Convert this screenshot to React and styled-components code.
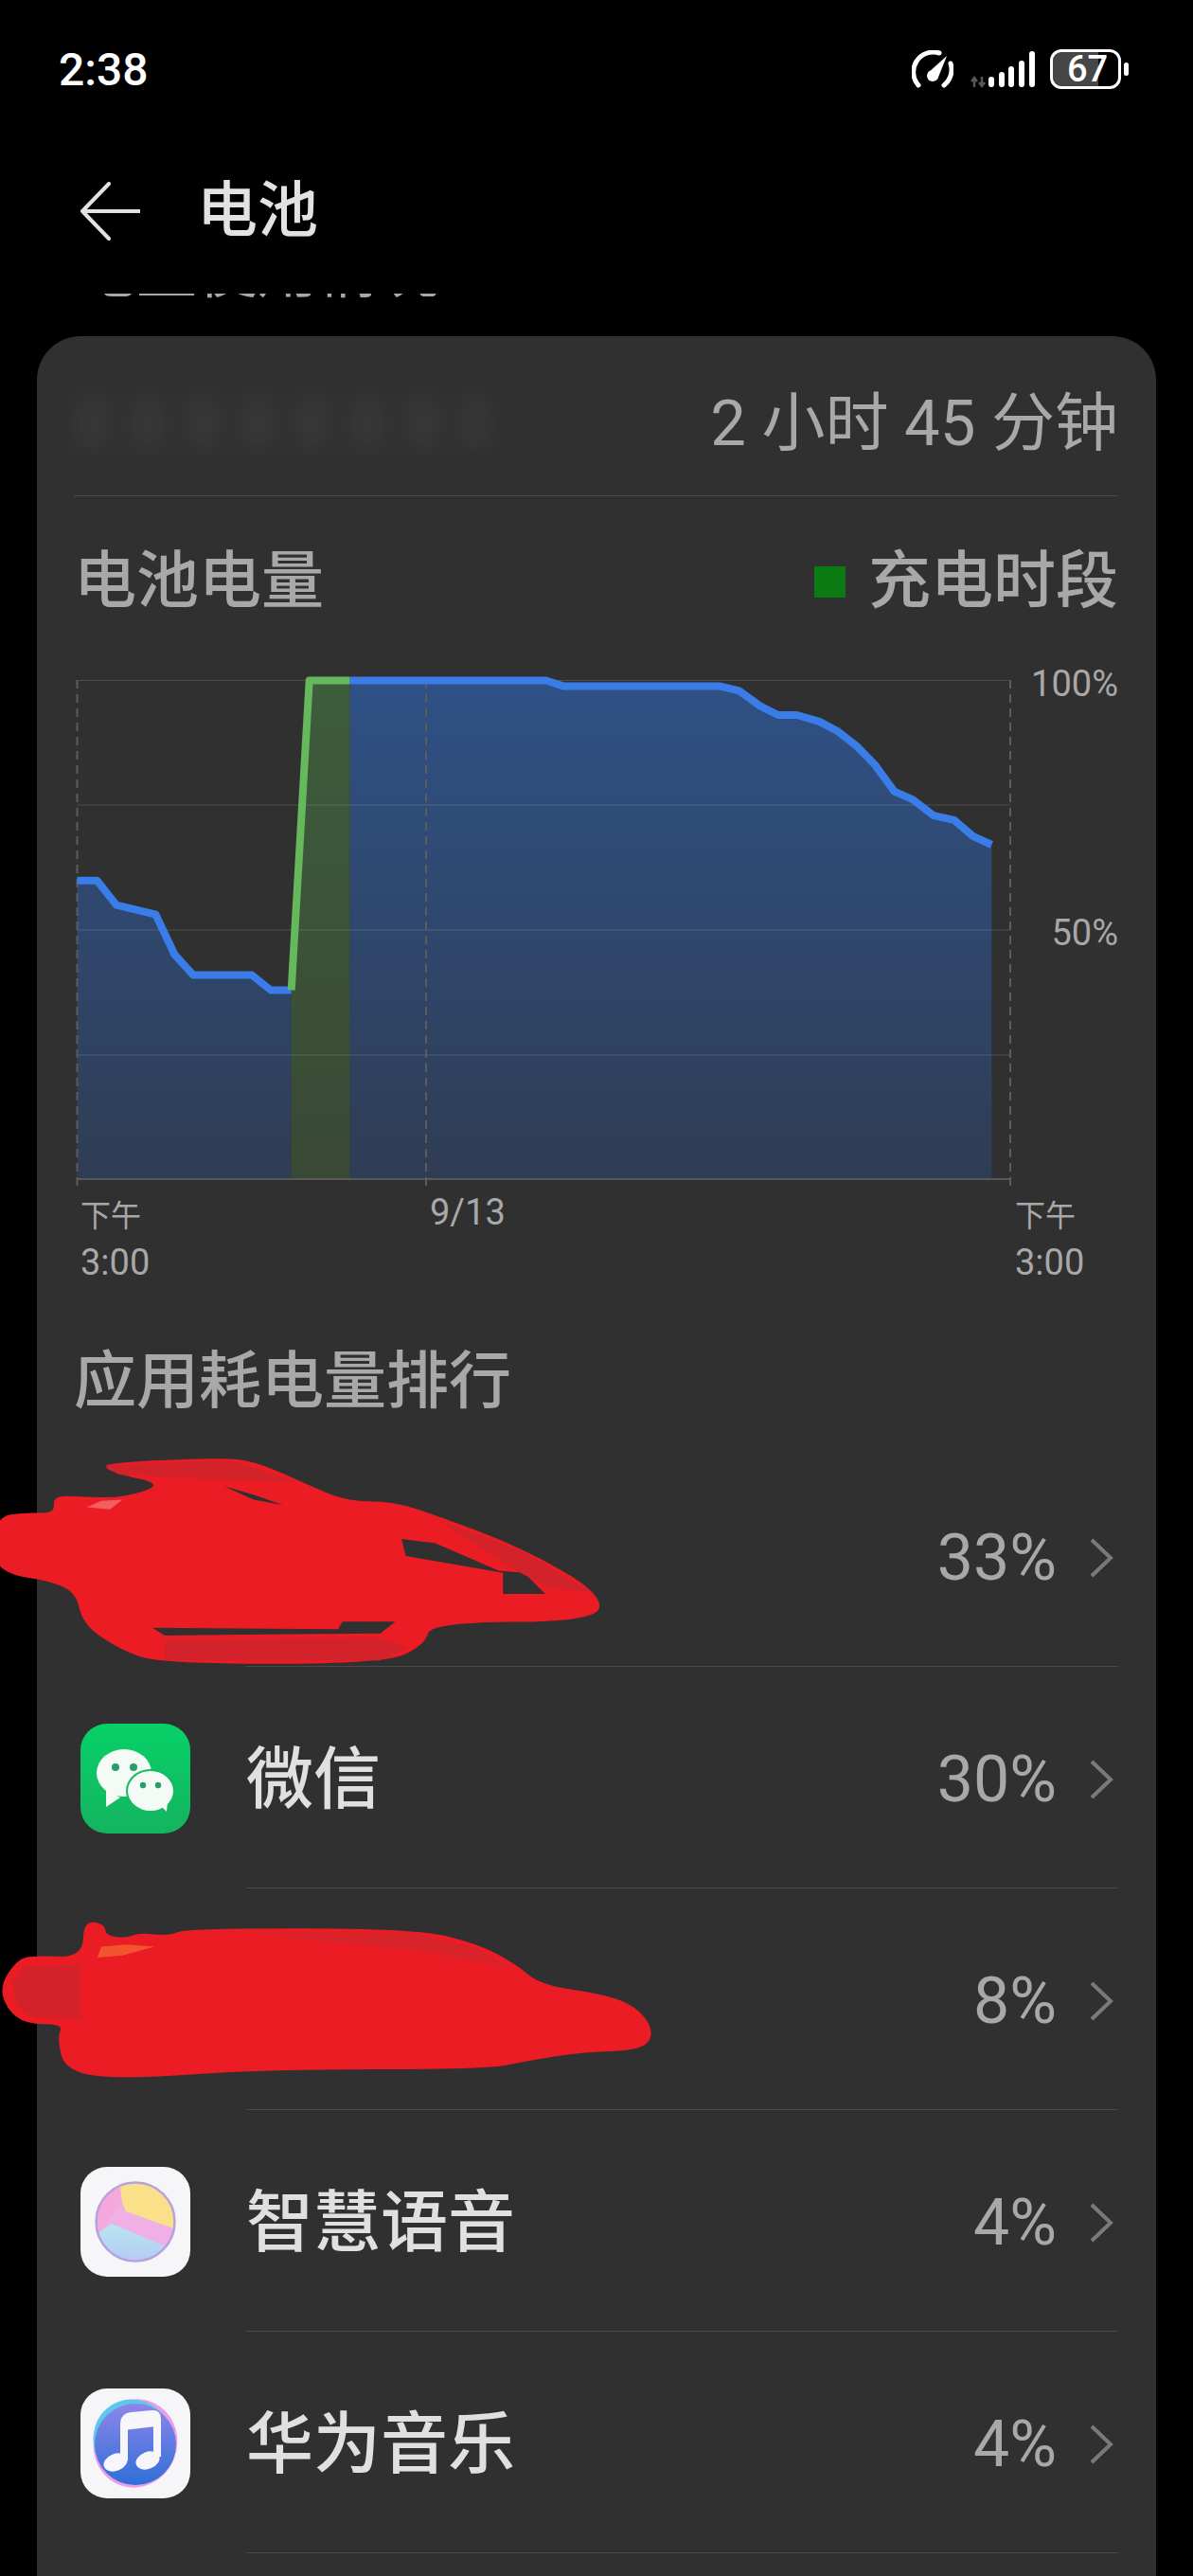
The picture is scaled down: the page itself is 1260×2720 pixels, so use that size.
import React from 'react';
import styled, { createGlobalStyle } from 'styled-components';

const GlobalStyle = createGlobalStyle`
  html, body {
    margin: 0;
    padding: 0;
    background: #000;
  }
  body {
    font-family: Roboto, "Noto Sans CJK SC", sans-serif;
  }
`;

// chart points are in page pixels, the svg viewBox below starts at 78,715
const PLOT_BOTTOM = 1246;
const dischargeA = [
  [81.5, 930.7], [102.5, 930.7], [123, 956.7], [164.5, 966.7], [184.3, 1008.8],
  [204, 1030.5], [266, 1030.5], [286, 1046.5], [307.7, 1046.5],
];
const charging = [[307.7, 1046.5], [326.7, 719.5], [369.4, 719.5]];
const dischargeB = [
  [369.4, 719.5], [576.6, 719.5], [595.5, 725.6], [760.6, 725.6], [780.4, 730.3],
  [804, 747.2], [821.9, 756], [841.7, 756], [865.4, 762.9], [885.1, 773.3],
  [904.9, 788.9], [924.7, 809.3], [944.5, 836.6], [964.2, 845.3], [986, 862.2],
  [1007.7, 866.9], [1027.5, 883.9], [1047.3, 893],
];

const toLine = (pts) => pts.map((p) => p.join(',')).join(' ');
const toArea = (pts) =>
  `${pts[0][0]},${PLOT_BOTTOM} ${toLine(pts)} ${pts[pts.length - 1][0]},${PLOT_BOTTOM}`;

// closed path through the midpoints, gives the paint strokes a brush-like edge
const smooth = (pts) => {
  const mid = (a, b) => [(a[0] + b[0]) / 2, (a[1] + b[1]) / 2];
  const start = mid(pts[pts.length - 1], pts[0]);
  let d = `M${start[0]} ${start[1]}`;
  pts.forEach((p, i) => {
    const m = mid(p, pts[(i + 1) % pts.length]);
    d += `Q${p[0]} ${p[1]} ${m[0]} ${m[1]}`;
  });
  return `${d}Z`;
};

const scribbleOne = [
  [-10, 222], [60, 212], [130, 215], [125, 172], [200, 175], [290, 178], [390, 146], [270, 120], [240, 98],
  [350, 90], [550, 83], [620, 98], [720, 143], [820, 186], [930, 186], [1040, 222], [1240, 298],
  [1425, 405], [1410, 470], [1020, 472], [1005, 525], [910, 570], [380, 570], [280, 535], [195, 475],
  [180, 400], [110, 372], [30, 362], [-15, 330],
];
// the gaps between the brush strokes keep their hard corners
const scribbleOneHoles =
  'M530 150L600 170L670 195L600 182Z' +
  'M950 275L1030 285L1180 350L1240 355L1290 405L1190 405L1190 355L960 315Z' +
  'M360 485L800 488L810 470L935 470L900 498L390 503Z';
const scribbleTwo = [
  [0, 1300], [40, 1240], [80, 1230], [195, 1235], [198, 1150], [248, 1158], [250, 1185], [300, 1190],
  [330, 1178], [400, 1185], [440, 1168], [980, 1168], [1130, 1203], [1220, 1250], [1280, 1298],
  [1420, 1318], [1500, 1343], [1548, 1400], [1525, 1448], [1380, 1452], [1250, 1472], [1150, 1492],
  [620, 1492], [300, 1515], [155, 1498], [135, 1420], [150, 1388], [60, 1388], [15, 1352],
];

const apps = [
  { id: 'a', percent: '33%', scribble: 'first' },
  { id: 'wechat', name: '微信', percent: '30%', icon: 'wechat' },
  { id: 'c', percent: '8%', scribble: 'second' },
  { id: 'voice', name: '智慧语音', percent: '4%', icon: 'voice' },
  { id: 'music', name: '华为音乐', percent: '4%', icon: 'music' },
];

const SpeedIcon = () => (
  <svg width="44" height="41" viewBox="0 0 44 41" fill="none">
    <path d="M7 37A21 21 0 0 1 29 3" stroke="#fff" strokeWidth="5" strokeLinecap="round" />
    <path d="M41 14A21 21 0 0 1 34 37" stroke="#fff" strokeWidth="5" strokeLinecap="round" />
    <path d="M17 24L37 6L27 31Z" fill="#fff" />
    <circle cx="22" cy="27" r="6" fill="#fff" />
  </svg>
);

const SignalIcon = () => (
  <svg width="76" height="44" viewBox="1020 50 76 44">
    <path d="M1029 91V83M1026 85L1029 81L1032 85" stroke="#555" strokeWidth="2.5" fill="none" />
    <path d="M1037 80V88M1034 86L1037 90L1040 86" stroke="#555" strokeWidth="2.5" fill="none" />
    <rect x="1044" y="80" width="6" height="11" rx="3" fill="#fff" />
    <rect x="1055" y="75" width="6" height="16" rx="3" fill="#fff" />
    <rect x="1065" y="69" width="6" height="22" rx="3" fill="#fff" />
    <rect x="1076" y="63" width="6" height="28" rx="3" fill="#fff" />
    <rect x="1087" y="53" width="6" height="38" rx="3" fill="#fff" />
  </svg>
);

const BackIcon = () => (
  <svg width="64" height="62" viewBox="0 0 64 62" fill="none">
    <path d="M31 2L3 31L31 60M3 31H64" stroke="#e2e2e2" strokeWidth="4" strokeLinecap="round" strokeLinejoin="round" />
  </svg>
);

const Chevron = () => (
  <svg width="26" height="42" viewBox="0 0 26 42" fill="none">
    <path d="M3 2L23 21L3 40" stroke="#7a7a7a" strokeWidth="4" />
  </svg>
);

const WeChatIcon = () => (
  <svg width="116" height="116" viewBox="0 0 116 116">
    <defs>
      <linearGradient id="wechatBg" x1="0" y1="0" x2="0" y2="1">
        <stop offset="0" stopColor="#07d168" />
        <stop offset="1" stopColor="#14b45f" />
      </linearGradient>
    </defs>
    <rect width="116" height="116" rx="28" fill="url(#wechatBg)" />
    <ellipse cx="46" cy="52" rx="29" ry="25" fill="#f4faf6" />
    <path d="M27 70L27 88L42 78Z" fill="#f4faf6" />
    <ellipse cx="74" cy="71" rx="26" ry="23" fill="#14b962" />
    <ellipse cx="74" cy="71" rx="24" ry="21" fill="#f4faf6" />
    <path d="M84 86L91 93L92 82Z" fill="#f4faf6" />
    <circle cx="37" cy="46" r="4" fill="#2a9c68" />
    <circle cx="56" cy="46" r="4" fill="#2a9c68" />
    <circle cx="66" cy="65" r="3.2" fill="#2a9c68" />
    <circle cx="82" cy="65" r="3.2" fill="#2a9c68" />
  </svg>
);

const VoiceIcon = () => (
  <svg width="116" height="116" viewBox="0 0 116 116">
    <defs>
      <clipPath id="voiceClip">
        <circle cx="58" cy="58" r="41" />
      </clipPath>
      <linearGradient id="voiceBlue" x1="0" y1="0" x2="0" y2="1">
        <stop offset="0" stopColor="#b8e6f2" />
        <stop offset="1" stopColor="#b4c8f4" />
      </linearGradient>
    </defs>
    <rect width="116" height="116" rx="28" fill="#f6f6f8" />
    <g clipPath="url(#voiceClip)">
      <rect x="15" y="15" width="86" height="86" fill="#f0b0e6" />
      <path d="M42 14L43 35L48 47L101 66V14Z" fill="#fbe08a" />
      <path d="M40 14L44 36L20 72L12 60V14Z" fill="#f4a8dc" />
      <path d="M15 72L33 60L90 84L78 104H15Z" fill="url(#voiceBlue)" />
    </g>
    <circle cx="58" cy="58" r="41.5" fill="none" stroke="#b7a2dc" strokeWidth="2.5" />
  </svg>
);

const MusicIcon = () => (
  <svg width="116" height="116" viewBox="0 0 116 116">
    <defs>
      <linearGradient id="musicBlue" x1="0" y1="0" x2="0" y2="1">
        <stop offset="0" stopColor="#8d86e8" />
        <stop offset="1" stopColor="#2f6fd8" />
      </linearGradient>
    </defs>
    <rect width="116" height="116" rx="28" fill="#f6f6f8" />
    <ellipse cx="58" cy="58" rx="44" ry="47" fill="#ec9fe6" transform="rotate(20 58 58)" />
    <ellipse cx="56" cy="56" rx="42" ry="45" fill="#5fc6ee" transform="rotate(-25 56 56)" />
    <circle cx="58" cy="59" r="43" fill="url(#musicBlue)" />
    <path d="M46 76V38Q46 30 54 29L76 27Q81 27 81 32V72" fill="none" stroke="#f6f6fb" strokeWidth="8" />
    <path d="M46 30H80V40L46 44Z" fill="#f6f6fb" />
    <ellipse cx="37" cy="78" rx="13" ry="9" fill="#f6f6fb" transform="rotate(-22 37 78)" />
    <ellipse cx="71" cy="76" rx="13" ry="9" fill="#f6f6fb" transform="rotate(-22 71 76)" />
  </svg>
);

const appIcons = { wechat: WeChatIcon, voice: VoiceIcon, music: MusicIcon };

// red paint strokes, coordinates come from the 1568 wide crop of the page
const FirstScribble = () => (
  <ScribbleSvg $top={3} width="700" height="239" viewBox="0 60 1568 535" preserveAspectRatio="none">
    <path fillRule="evenodd" fill="#ec1c24" d={smooth(scribbleOne) + scribbleOneHoles} />
    <path fill="#d4222a" d="M250 100L550 90L700 140L520 135L280 122Z" />
    <path fill="#d4222a" d="M1040 232L1240 305L1400 400L1300 392L1200 338Z" />
    <path fill="#d4222a" d="M390 512L900 508L965 530L900 562L390 562Z" />
    <path fill="#f06060" d="M205 200L240 185L290 182L260 205Z" />
  </ScribbleSvg>
);

const SecondScribble = () => (
  <ScribbleSvg $top={11} width="700" height="215" viewBox="0 1100 1568 468" preserveAspectRatio="none">
    <path fill="#ec1c24" d={smooth(scribbleTwo)} />
    <path fill="#d4222a" d="M30 1290L55 1255L190 1250L190 1375L70 1370L40 1345Z" />
    <path fill="#d8232b" d="M600 1180L980 1178L1130 1215L1210 1260L1000 1220Z" />
    <path fill="#f2552e" d="M240 1210L300 1205L365 1210L290 1230L230 1235Z" />
  </ScribbleSvg>
);

const App = () => (
  <Page>
    <GlobalStyle />
    <StatusBar>
      <Clock>2:38</Clock>
      <StatusIcons>
        <SpeedIcon />
        <SignalIcon />
        <Battery>67</Battery>
        <BatteryNub />
      </StatusIcons>
    </StatusBar>

    <Header>
      <BackIcon />
      <Title>电池</Title>
    </Header>

    <ClippedLine>
      <span>电量使用情况</span>
    </ClippedLine>

    <Card>
      <UsageRow>
        <BlurredLabel />
        <Duration>2 小时 45 分钟</Duration>
      </UsageRow>

      <LegendRow>
        <SectionTitle>电池电量</SectionTitle>
        <Legend>
          <LegendSwatch />
          <SectionTitle>充电时段</SectionTitle>
        </Legend>
      </LegendRow>

      <ChartRow>
        <ChartSvg width="990" height="545" viewBox="78 715 990 545">
          <defs>
            <linearGradient id="blueFill" gradientUnits="userSpaceOnUse" x1="0" y1="719" x2="0" y2="1245">
              <stop offset="0" stopColor="#2f5186" />
              <stop offset="1" stopColor="#2f3d54" />
            </linearGradient>
            <linearGradient id="greenFill" gradientUnits="userSpaceOnUse" x1="0" y1="719" x2="0" y2="1245">
              <stop offset="0" stopColor="#3d5d3c" />
              <stop offset="1" stopColor="#3a4934" />
            </linearGradient>
          </defs>
          <polygon points={toArea(dischargeA)} fill="url(#blueFill)" />
          <polygon points={toArea(dischargeB)} fill="url(#blueFill)" />
          <polygon points={toArea(charging)} fill="url(#greenFill)" />
          {[719.5, 851, 983, 1115].map((y) => (
            <line key={y} x1="81" x2="1067" y1={y} y2={y} stroke="#fff" strokeOpacity="0.14" strokeWidth="1" />
          ))}
          <line x1="81" x2="1067" y1={PLOT_BOTTOM} y2={PLOT_BOTTOM} stroke="#666" strokeWidth="1.5" />
          {[81.5, 450, 1067].map((x) => (
            <line key={x} x1={x} x2={x} y1="719" y2="1258" stroke="#5c5c5c" strokeWidth="2" strokeDasharray="9 6" />
          ))}
          <polyline points={toLine(dischargeA)} fill="none" stroke="#3a7de8" strokeWidth="8" strokeLinejoin="round" />
          <polyline points={toLine(dischargeB)} fill="none" stroke="#3a7de8" strokeWidth="8" strokeLinejoin="round" />
          <polyline points={toLine(charging)} fill="none" stroke="#65b85c" strokeWidth="8" strokeLinejoin="round" />
        </ChartSvg>
        <YAxis>
          <AxisLabel>100%</AxisLabel>
          <AxisLabel>50%</AxisLabel>
        </YAxis>
      </ChartRow>

      <XAxis>
        <AxisLabel><AxisCjk>下午</AxisCjk><br />3:00</AxisLabel>
        <DateLabel>9/13</DateLabel>
        <AxisLabel><AxisCjk>下午</AxisCjk><br />3:00</AxisLabel>
      </XAxis>

      <RankTitle>应用耗电量排行</RankTitle>

      {apps.map((app) => {
        const Icon = appIcons[app.icon];
        return (
          <AppRow key={app.id}>
            <IconSlot>{Icon && <Icon />}</IconSlot>
            <RowBody>
              <AppName>{app.name}</AppName>
              <Percent>{app.percent}</Percent>
              <ChevronSlot><Chevron /></ChevronSlot>
            </RowBody>
            {app.scribble === 'first' && <FirstScribble />}
            {app.scribble === 'second' && <SecondScribble />}
          </AppRow>
        );
      })}
    </Card>
  </Page>
);

const Page = styled.div`
  width: 1260px;
  height: 2720px;
  overflow: hidden;
  background: #000;
`;

const StatusBar = styled.div`
  height: 142px;
  padding: 4px 68px 0 62px;
  box-sizing: border-box;
  display: flex;
  align-items: center;
  justify-content: space-between;
`;

const Clock = styled.div`
  font-size: 48px;
  font-weight: 500;
  color: #fff;
`;

const StatusIcons = styled.div`
  display: flex;
  align-items: center;
  gap: 13px;
`;

const Battery = styled.div`
  width: 75px;
  height: 42px;
  box-sizing: border-box;
  border: 3px solid #fff;
  border-radius: 12px;
  background: linear-gradient(90deg, #464646 0 70%, #000 70%);
  background-clip: padding-box;
  color: #fff;
  font-size: 38px;
  font-weight: 500;
  line-height: 36px;
  padding-left: 15px;
`;

const BatteryNub = styled.div`
  width: 5px;
  height: 14px;
  margin-left: -10px;
  border-radius: 3px;
  background: #fff;
`;

const Header = styled.div`
  height: 162px;
  padding-left: 84px;
  display: flex;
  align-items: center;
  gap: 60px;
`;

const Title = styled.h1`
  margin: 0;
  font-size: 64px;
  font-weight: 500;
  line-height: 1;
  color: #e2e2e2;
`;

// the list above the card has scrolled away, only the foot of this line shows
const ClippedLine = styled.div`
  height: 7px;
  margin: 6px 0 38px;
  padding-left: 80px;
  overflow: hidden;
  display: flex;
  align-items: flex-end;

  span {
    flex: none;
    font-size: 64px;
    line-height: 44px;
    margin-bottom: 8px;
    color: #a8a8a8;
  }
`;

const Card = styled.div`
  width: 1182px;
  margin-left: 39px;
  box-sizing: border-box;
  height: 2400px;
  padding: 0 40px 0 39px;
  background: #303030;
  border-radius: 46px 46px 0 0;
`;

const UsageRow = styled.div`
  height: 169px;
  box-sizing: border-box;
  padding-top: 16px;
  display: flex;
  align-items: center;
  justify-content: space-between;
  border-bottom: 1px solid #4a4a4a;
`;

const BlurredLabel = styled.div`
  width: 440px;
  height: 56px;
  background: repeating-linear-gradient(90deg, #363636 0 40px, #303030 40px 58px);
  filter: blur(9px);
`;

const Duration = styled.div`
  font-size: 67px;
  line-height: 1;
  color: #a8a8a8;
`;

const LegendRow = styled.div`
  height: 174px;
  box-sizing: border-box;
  padding-top: 6px;
  display: flex;
  align-items: center;
  justify-content: space-between;
`;

const SectionTitle = styled.div`
  font-size: 66px;
  font-weight: 500;
  line-height: 1;
  color: #a8a8a8;
`;

const Legend = styled.div`
  display: flex;
  align-items: center;
  gap: 24px;
`;

const LegendSwatch = styled.div`
  width: 33px;
  height: 33px;
  background: #0b7a12;
`;

const ChartRow = styled.div`
  display: flex;
`;

const ChartSvg = styled.svg`
  display: block;
  flex: none;
  margin-top: 16px;
`;

const YAxis = styled.div`
  flex: 1;
  display: flex;
  flex-direction: column;
  align-items: flex-end;
  gap: 214px;
`;

const AxisLabel = styled.div`
  font-size: 38px;
  line-height: 49px;
  color: #a8a8a8;
`;

const AxisCjk = styled.span`
  font-size: 32px;
`;

const DateLabel = styled(AxisLabel)`
  margin-top: -2px;
`;

const XAxis = styled.div`
  display: grid;
  grid-template-columns: 369px 618px 108px;
  padding-left: 7px;
  margin-top: -1px;
`;

const RankTitle = styled(SectionTitle)`
  margin: 68px 0 34px 0;
`;

const AppRow = styled.div`
  position: relative;
  height: 234px;
  display: flex;
`;

const IconSlot = styled.div`
  flex: none;
  width: 116px;
  margin: 0 59px 0 7px;
  padding-top: 1px;
  display: flex;
  align-items: center;
`;

const RowBody = styled.div`
  flex: 1;
  box-sizing: border-box;
  padding-top: 4px;
  display: flex;
  align-items: center;
  border-bottom: 1px solid #4a4a4a;
`;

const AppName = styled.div`
  flex: 1;
  font-size: 71px;
  font-weight: 500;
  line-height: 1;
  color: #e0e0e0;
`;

const Percent = styled.div`
  font-size: 68px;
  line-height: 1;
  color: #a8a8a8;
`;

const ChevronSlot = styled.div`
  display: flex;
  margin: 0 5px 0 34px;
`;

const ScribbleSvg = styled.svg`
  position: absolute;
  left: -78px;
  top: ${(p) => p.$top}px;
`;

export default App;
